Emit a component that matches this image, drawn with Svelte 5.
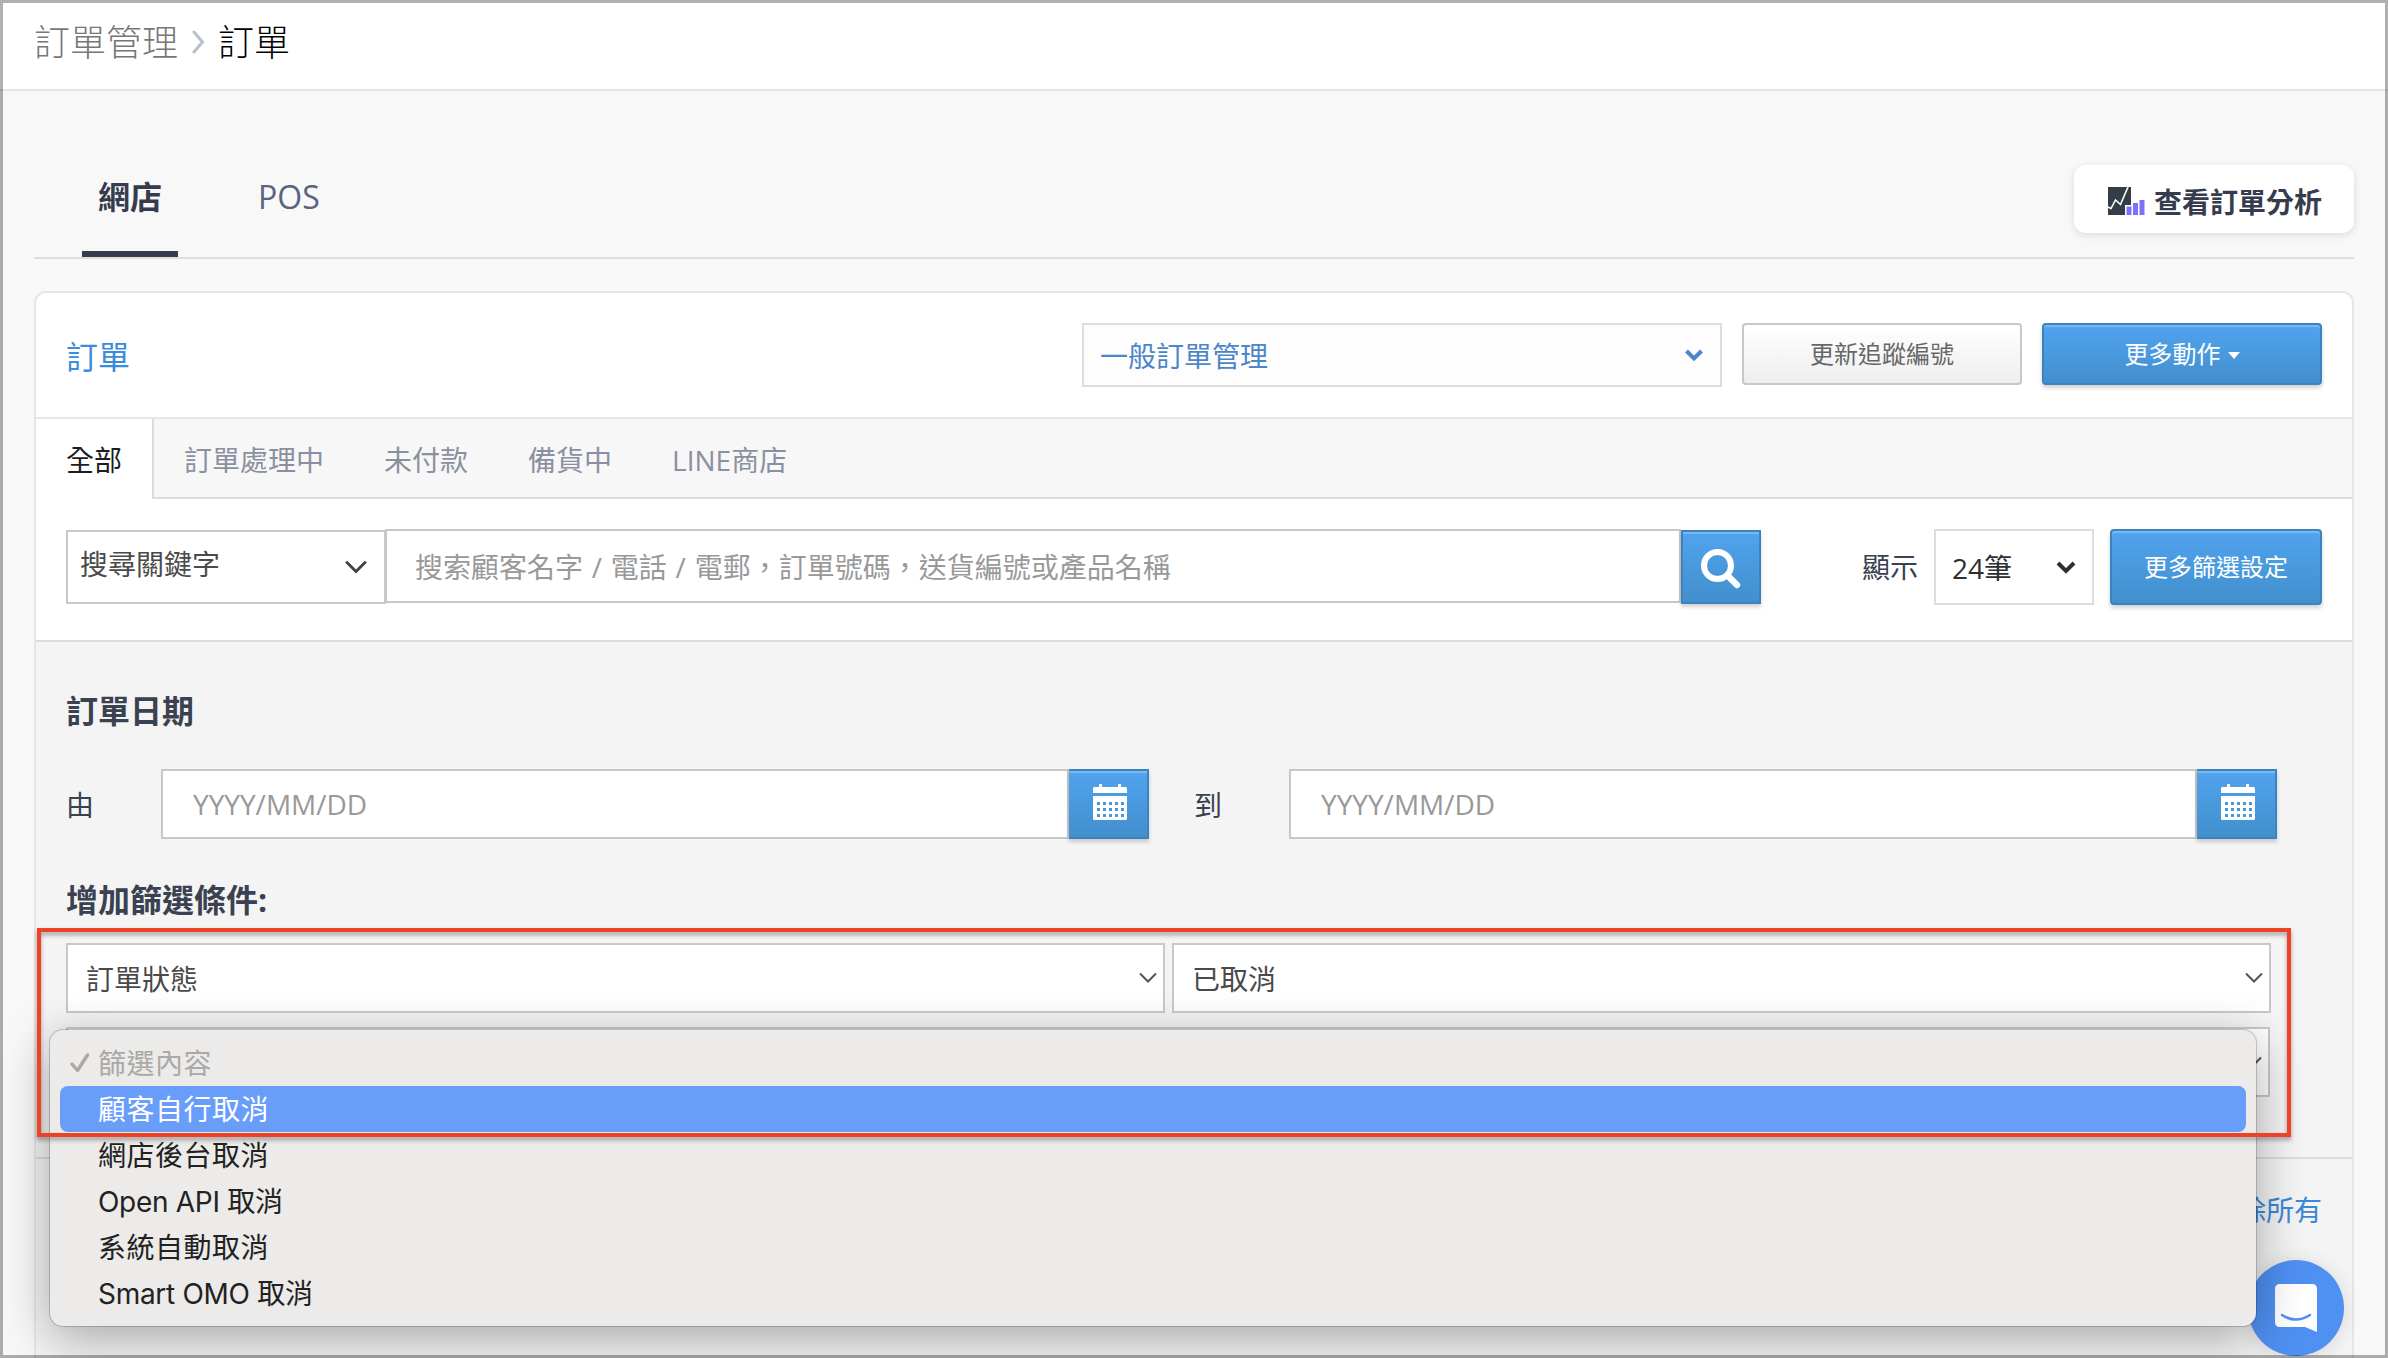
<script lang="ts">
  const orderTabs = ['全部', '訂單處理中', '未付款', '備貨中', 'LINE商店'];
  let activeTab = '全部';

  const reasons = [
    { label: '篩選內容', placeholder: true },
    { label: '顧客自行取消' },
    { label: '網店後台取消' },
    { label: 'Open API 取消', latin: true },
    { label: '系統自動取消' },
    { label: 'Smart OMO 取消', latin: true }
  ];
  let hovered = '顧客自行取消';

  const dateFields = ['由', '到'];
  const dotRows = [18, 24, 30];
  const dotCols = [4, 10, 16, 22, 28];
</script>

<div class="page">
  <header class="breadcrumb">
    <span class="crumb">訂單管理</span>
    <svg class="crumb-arrow" width="14" height="24" viewBox="0 0 14 24">
      <path d="M3 2l8.500 10-8.500 10" fill="none" stroke="#b8c0cf" stroke-width="3" stroke-linecap="round" />
    </svg>
    <span class="crumb current">訂單</span>
  </header>

  <nav class="channels">
    <button class="channel active">網店</button>
    <button class="channel">POS</button>
    <button class="analytics">
      <svg width="37" height="28" viewBox="0 0 37 28">
        <path d="M0 0h23v18h-6v10H0z" fill="#333d47" />
        <path d="M0 20l3 1.500L7.500 13l5 4.500L20 0" fill="none" stroke="#fff" stroke-width="1.600" />
        <path d="M18.500 19.500h5V28h-5zM25 16h5v12h-5zM31.500 13h5v15h-5z" fill="#7b74fb" />
      </svg>
      <span>查看訂單分析</span>
    </button>
  </nav>

  <section class="card">
    <div class="card-head">
      <h2>訂單</h2>
      <div class="mode-select">
        <span>一般訂單管理</span>
        <svg width="20" height="14" viewBox="0 0 20 14">
          <path d="M2.500 3L10 10.500 17.500 3" fill="none" stroke="#4d86c8" stroke-width="4" />
        </svg>
      </div>
      <button class="btn plain">更新追蹤編號</button>
      <button class="btn blue">更多動作<i class="caret"></i></button>
    </div>

    <div class="tabs">
      {#each orderTabs as tab}
        <button class="tab" class:active={tab === activeTab} on:click={() => (activeTab = tab)}>{tab}</button>
      {/each}
    </div>

    <div class="search-row">
      <div class="key-select">
        <span>搜尋關鍵字</span>
        <svg width="24" height="16" viewBox="0 0 24 16">
          <path d="M3 3.500l9 9 9-9" fill="none" stroke="#444" stroke-width="3" stroke-linecap="round" />
        </svg>
      </div>
      <div class="search-input">搜索顧客名字 / 電話 / 電郵，訂單號碼，送貨編號或產品名稱</div>
      <button class="btn blue search-btn" title="搜索">
        <svg width="40" height="40" viewBox="0 0 40 40" fill="none" stroke="#fff">
          <circle cx="16.500" cy="16.500" r="13.500" stroke-width="6" />
          <path d="M26.500 26.500L36 36" stroke-width="6.500" stroke-linecap="round" />
        </svg>
      </button>
      <span class="show-label">顯示</span>
      <div class="count-select">
        <span>24筆</span>
        <svg width="20" height="14" viewBox="0 0 20 14">
          <path d="M2 3l8 8 8-8" fill="none" stroke="#2d2f33" stroke-width="4" />
        </svg>
      </div>
      <button class="btn blue more-btn">更多篩選設定</button>
    </div>

    <div class="filters">
      <h3>訂單日期</h3>
      <div class="dates">
        {#each dateFields as field}
          <span class="date-label">{field}</span>
          <div class="date-input">YYYY/MM/DD</div>
          <button class="btn blue date-btn">
            <svg width="34" height="36" viewBox="0 0 34 36" fill="#fff">
              <path d="M1.500 3H6V0h3v3h16V0h3v3h4.500Q34 3 34 4.500V9H0V4.500Q0 3 1.500 3z" />
              <path d="M0 12h34v22.500q0 1.500-1.500 1.500h-31Q0 36 0 34.500z" />
              {#each dotRows as y}
                {#each dotCols as x}
                  <rect {x} {y} width="3" height="3" fill="#4897dc" />
                {/each}
              {/each}
            </svg>
          </button>
        {/each}
      </div>

      <h3>增加篩選條件:</h3>
      <div class="conditions">
        {#each ['訂單狀態', '已取消', ''] as value}
          <div class="condition" class:wide={!value}>
            <span>{value}</span>
            <svg width="20" height="12" viewBox="0 0 20 12">
              <path d="M2 1.500l8 8 8-8" fill="none" stroke="#555" stroke-width="2" />
            </svg>
          </div>
        {/each}
      </div>
    </div>

    <div class="clear-row">
      <a class="clear" href="#clear">清除所有</a>
    </div>
  </section>

  <button class="chat" title="chat">
    <svg width="42" height="48" viewBox="0 0 42 48">
      <path d="M5 0h32q5 0 5 5v43l-12-5H5q-5 0-5-5V5q0-5 5-5z" fill="#fff" />
      <path d="M7 31q14 9 28 0" fill="none" stroke="#4f90f3" stroke-width="2.600" stroke-linecap="round" />
    </svg>
  </button>

  <ul class="menu">
    {#each reasons as reason}
      <li
        class:placeholder={reason.placeholder}
        class:latin={reason.latin}
        class:hovered={reason.label === hovered}
      >
        {#if reason.placeholder}
          <svg class="check" width="20" height="20" viewBox="0 0 20 20">
            <path d="M2 11l5.500 6.500L17.500 2" fill="none" stroke="#aaa9a8" stroke-width="3.400" stroke-linecap="round" stroke-linejoin="round" />
          </svg>
        {/if}
        {reason.label}
      </li>
    {/each}
  </ul>

  <div class="highlight"></div>
  <div class="frame"></div>
</div>

<style>
  :global(body) {
    margin: 0;
    background: #f8f8f8;
  }

  .page {
    position: relative;
    box-sizing: border-box;
    width: 2388px;
    height: 1358px;
    overflow: hidden;
    background: #f8f8f8;
    font-family: 'Open Sans', 'Noto Sans CJK TC', sans-serif;
    font-size: 28px;
    color: #3a4150;
  }

  .page :global(*) {
    box-sizing: border-box;
  }

  button {
    padding: 0;
    border: 0;
    background: none;
    font: inherit;
    color: inherit;
    cursor: pointer;
  }

  svg {
    display: block;
    flex: none;
  }

  .breadcrumb {
    display: flex;
    align-items: center;
    height: 91px;
    padding: 0 0 10px 34px;
    background: #fff;
    border-bottom: 2px solid #e5e5e5;
  }

  .crumb {
    font-family: 'Noto Sans CJK TC', sans-serif;
    font-size: 36px;
    font-weight: 300;
    line-height: 78px;
    color: #777;
  }

  .crumb.current {
    color: #000;
  }

  .crumb-arrow {
    margin: 4px 13px 0 13px;
  }

  .channels {
    display: flex;
    align-items: flex-end;
    height: 168px;
    margin: 0 34px;
    padding-left: 48px;
    border-bottom: 2px solid #dedede;
  }

  .channel {
    height: 92px;
    padding: 2px 16px 25px;
    margin-right: 64px;
    font-size: 32px;
    line-height: 59px;
    color: #5a6380;
    border-bottom: 6px solid transparent;
  }

  .channel.active {
    font-weight: 700;
    color: #363c4e;
    border-color: #363c4e;
  }

  .analytics {
    display: flex;
    align-items: center;
    gap: 9px;
    width: 280px;
    height: 68px;
    margin: 0 0 24px auto;
    padding: 6px 0 0 34px;
    background: #fff;
    border-radius: 12px;
    box-shadow: 0 2px 8px rgba(0, 0, 0, 0.12);
    font-weight: 600;
    line-height: 40px;
    color: #363c4e;
  }

  .analytics svg {
    margin-bottom: 2px;
  }

  .card {
    margin: 32px 34px 0;
    height: 1100px;
    border: 2px solid #e6e6e6;
    border-radius: 12px;
    background: #f4f4f4;
    overflow: hidden;
  }

  .card-head {
    display: flex;
    height: 126px;
    padding: 30px 30px 0;
    background: #fff;
    border-bottom: 2px solid #e6e6e6;
  }

  h2 {
    margin: 0 auto 0 0;
    font-size: 32px;
    font-weight: 400;
    line-height: 68px;
    color: #3b8cdc;
  }

  .mode-select {
    display: flex;
    align-items: center;
    justify-content: space-between;
    width: 640px;
    height: 64px;
    margin-right: 20px;
    padding: 0 16px;
    border: 2px solid #ddd;
    background: #fdfdfd;
    color: #4d86c8;
  }

  .btn {
    display: flex;
    align-items: center;
    justify-content: center;
    width: 280px;
    height: 62px;
    padding-bottom: 3px;
    border-radius: 4px;
    font-size: 24px;
  }

  .btn.plain {
    margin-right: 20px;
    border: 2px solid #c8c8c8;
    background: linear-gradient(#fff, #eee);
    color: #666;
  }

  .btn.blue {
    border: 2px solid #3b82c0;
    background: linear-gradient(#50a3ee, #428fcd);
    box-shadow:
      inset 0 2px 1px rgba(255, 255, 255, 0.25),
      0 3px 4px rgba(0, 0, 0, 0.18);
    color: #fff;
  }

  .caret {
    margin: 6px 0 0 7px;
    border: 6px solid transparent;
    border-top: 7px solid #fff;
    border-bottom: 0;
  }

  .tabs {
    display: flex;
    height: 80px;
    background: #f7f7f7;
  }

  .tab {
    padding: 2px 30px 0;
    border-bottom: 2px solid #dcdcdc;
    color: #8a90a0;
  }

  .tab:last-child {
    flex: 1;
    text-align: left;
  }

  .tab.active {
    padding-top: 0;
    border-right: 2px solid #dcdcdc;
    border-bottom: 0;
    background: #fff;
    color: #1c1d22;
  }

  .search-row {
    display: flex;
    align-items: flex-start;
    height: 143px;
    padding: 30px 30px 0;
    background: #fff;
    border-bottom: 2px solid #dcdcdc;
  }

  .key-select {
    display: flex;
    align-items: center;
    justify-content: space-between;
    width: 320px;
    height: 74px;
    margin-top: 1px;
    padding: 0 16px 8px 12px;
    border: 2px solid #c8c8c8;
    color: #4a4a4a;
  }

  .key-select svg {
    margin-top: 8px;
  }

  .search-input {
    flex: 1;
    height: 74px;
    margin-left: -1px;
    padding-left: 28px;
    border: 2px solid #c8c8c8;
    line-height: 72px;
    word-spacing: 1.5px;
    color: #999;
  }

  .btn.search-btn {
    width: 80px;
    height: 74px;
    margin-top: 1px;
    padding: 3px 0 0;
    border-radius: 0;
  }

  .show-label {
    margin: 0 16px 0 101px;
    line-height: 76px;
  }

  .count-select {
    display: flex;
    align-items: center;
    justify-content: space-between;
    width: 160px;
    height: 76px;
    margin-right: 16px;
    padding: 0 16px;
    border: 2px solid #ddd;
    color: #2d2f33;
  }

  .btn.more-btn {
    width: 212px;
    height: 76px;
  }

  .filters {
    height: 517px;
    padding: 39px 30px 0;
    border-bottom: 2px solid #dcdcdc;
  }

  h3 {
    margin: 0;
    font-size: 32px;
    font-weight: 700;
    line-height: 60px;
  }

  .dates {
    display: flex;
    align-items: center;
    height: 70px;
    margin: 28px 45px 31px 0;
  }

  .date-label {
    width: 95px;
  }

  .btn + .date-label {
    width: 140px;
    padding-left: 45px;
  }

  .date-input {
    flex: 1;
    height: 70px;
    padding-left: 30px;
    border: 2px solid #c8c8c8;
    background: #fff;
    line-height: 66px;
    color: #999;
  }

  .btn.date-btn {
    width: 80px;
    height: 70px;
    padding: 0 0 4px 3px;
    border-left: 0;
    border-radius: 0;
  }

  .conditions {
    display: grid;
    grid-template-columns: 1099px 1099px;
    gap: 14px 7px;
    margin-top: 13px;
  }

  .condition {
    display: flex;
    align-items: center;
    justify-content: space-between;
    height: 70px;
    padding: 0 5px 0 18px;
    border: 2px solid #c8c8c8;
    background: #fff;
    color: #4a4a4a;
  }

  .condition.wide {
    grid-column: span 2;
    margin-right: 1px;
  }

  .clear-row {
    display: flex;
    justify-content: flex-end;
    padding: 29px 30px 0;
  }

  .clear {
    line-height: 44px;
    color: #3b88d6;
    text-decoration: none;
  }

  .chat {
    position: absolute;
    left: 2248px;
    top: 1260px;
    display: flex;
    align-items: center;
    justify-content: center;
    width: 96px;
    height: 96px;
    border-radius: 50%;
    background: #4f90f3;
    box-shadow: 0 2px 20px rgba(0, 0, 0, 0.12);
  }

  .menu {
    position: absolute;
    left: 50px;
    top: 1030px;
    width: 2206px;
    margin: 0;
    padding: 10px;
    border-radius: 13px;
    background: #ecebe9;
    box-shadow:
      0 0 0 1px rgba(0, 0, 0, 0.18),
      0 12px 50px rgba(0, 0, 0, 0.33);
    font-family: Inter, 'Noto Sans CJK TC', sans-serif;
    letter-spacing: 0.5px;
    list-style: none;
    color: #222;
  }

  .menu li {
    position: relative;
    height: 46px;
    padding-left: 38px;
    line-height: 49px;
    border-radius: 8px;
  }

  .menu .placeholder {
    color: #aaa9a8;
  }

  .menu .latin {
    letter-spacing: -0.3px;
  }

  .menu .hovered {
    background: #689df9;
    color: #fff;
  }

  .check {
    position: absolute;
    left: 10px;
    top: 13px;
  }

  .highlight {
    position: absolute;
    left: 37px;
    top: 928px;
    width: 2254px;
    height: 209px;
    border: 4px solid #ec4225;
    filter: drop-shadow(0 3px 2px rgba(0, 0, 0, 0.35));
  }

  .frame {
    position: absolute;
    inset: 0;
    border: 3px solid rgba(0, 0, 0, 0.31);
    pointer-events: none;
  }
</style>
